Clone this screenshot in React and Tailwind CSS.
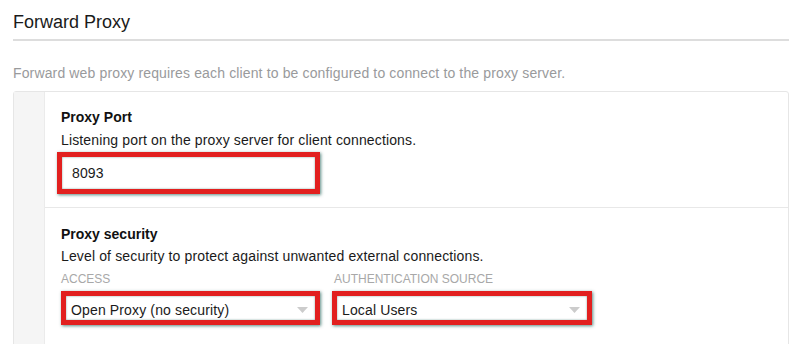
export default function App() {
  const redBox =
    "border-[5px] border-[#e2201f] bg-white shadow-[1px_1px_3px_rgba(20,90,80,0.7),inset_0_0_2px_rgba(20,90,80,0.6)]";
  const Arrow = () => (
    <svg width="11" height="6" viewBox="0 0 11 6" className="shrink-0">
      <path d="M0 0 L11 0 L5.5 6 Z" fill="#cccccc" />
    </svg>
  );
  return (
    <div
      className="w-[797px] h-[344px] overflow-hidden bg-white pl-[13px] pr-[8px]"
      style={{ fontFamily: '"Liberation Sans", Arial, sans-serif' }}
    >
      <div className="mt-[12px] pb-[7px] border-b-2 border-[#dddddd]">
        <h1 className="text-[18px] leading-[20px] text-[#1a1a1a]">Forward Proxy</h1>
      </div>
      <p className="mt-[22px] text-[14px] leading-[20px] tracking-[0.14px] text-[#999a9c]">
        Forward web proxy requires each client to be configured to connect to the proxy server.
      </p>
      <div className="mt-[8px] flex border border-[#e6e6e6] rounded-[3px] min-h-[300px]">
        <div className="w-[31px] shrink-0 bg-[#f5f5f5] border-r border-[#ebebeb]" />
        <div className="flex-1">
          <div className="pl-[16px] pt-[15px] pb-[13px] border-b border-[#e8e8e8]">
            <div className="text-[14px] leading-[20px] font-bold text-[#111]">Proxy Port</div>
            <div className="mt-[3px] text-[14px] leading-[20px] tracking-[0.14px] text-[#1a1a1a]">
              Listening port on the proxy server for client connections.
            </div>
            <div className={`mt-[2px] -ml-[4px] w-[263px] h-[42px] ${redBox}`}>
              <div className="pl-[10px] pt-[6px] text-[14px] leading-[20px] tracking-[0.14px] text-[#1a1a1a]">8093</div>
            </div>
          </div>
          <div className="pl-[16px] pt-[16px] pb-[40px]">
            <div className="text-[14px] leading-[20px] font-bold text-[#111]">Proxy security</div>
            <div className="mt-[2px] text-[14px] leading-[20px] tracking-[0.14px] text-[#1a1a1a]">
              Level of security to protect against unwanted external connections.
            </div>
            <div className="mt-[5px] flex gap-[12px]">
              <div className="w-[259px]">
                <div className="text-[12px] leading-[16px] text-[#a8a8a8] uppercase">Access</div>
                <div className={`mt-[4px] h-[34px] flex items-start justify-between ${redBox}`}>
                  <span className="pl-[5px] pt-[4px] text-[14px] leading-[20px] tracking-[0.14px] text-[#1a1a1a]">
                    Open Proxy (no security)
                  </span>
                  <div className="pt-[11px] pr-[7px]">
                    <Arrow />
                  </div>
                </div>
              </div>
              <div className="w-[260px]">
                <div className="pl-[2px] text-[12px] leading-[16px] text-[#a8a8a8] uppercase">
                  Authentication Source
                </div>
                <div className={`mt-[4px] h-[34px] flex items-start justify-between ${redBox}`}>
                  <span className="pl-[5px] pt-[4px] text-[14px] leading-[20px] tracking-[0.14px] text-[#1a1a1a]">
                    Local Users
                  </span>
                  <div className="pt-[11px] pr-[7px]">
                    <Arrow />
                  </div>
                </div>
              </div>
            </div>
          </div>
        </div>
      </div>
    </div>
  );
}
